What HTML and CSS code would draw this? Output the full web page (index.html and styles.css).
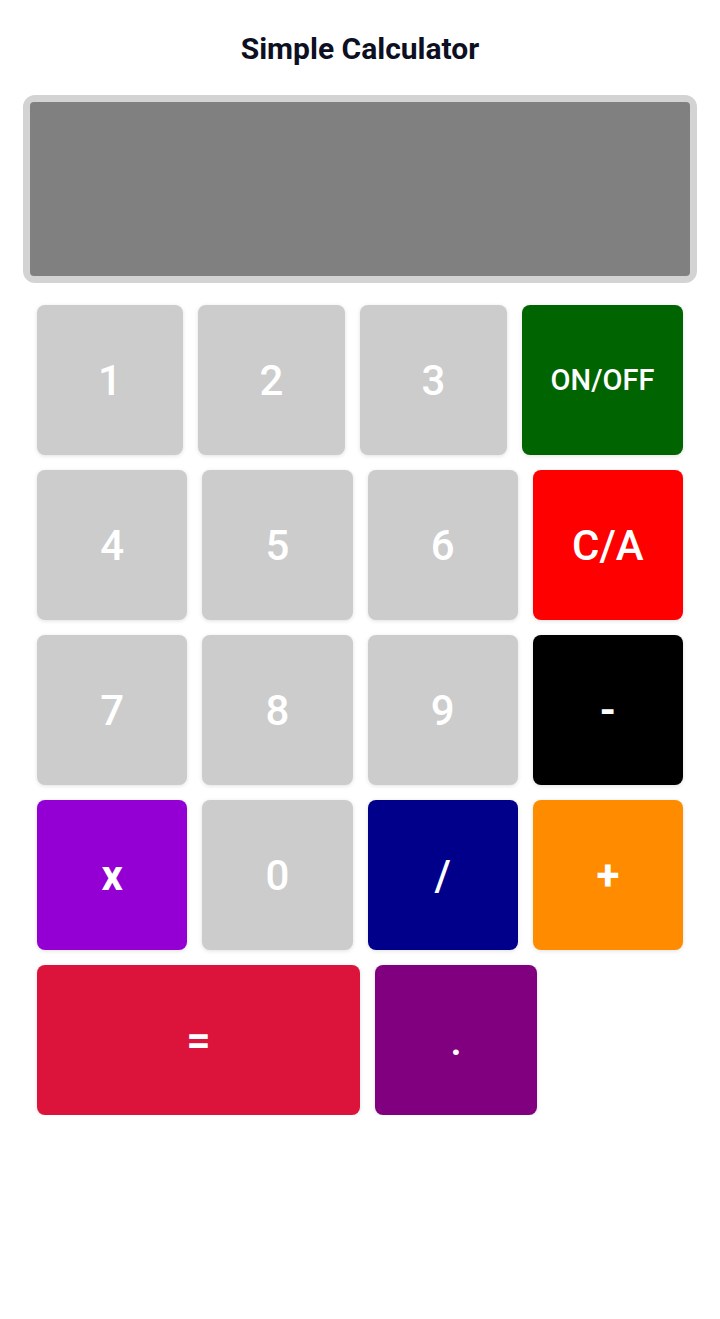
FILE: index.html
```html
<!DOCTYPE html>
<html>
<head>
<meta charset="utf-8">
<link rel="stylesheet" href="styles.css">
</head>
<body>
<h1 class="title">Simple Calculator</h1>
<div class="display"><div class="screen"></div></div>
<div class="keys">
  <div class="row row-first">
    <button class="key gray">1</button>
    <button class="key gray">2</button>
    <button class="key gray">3</button>
    <button class="key green small">ON/OFF</button>
  </div>
  <div class="row">
    <button class="key gray">4</button>
    <button class="key gray">5</button>
    <button class="key gray">6</button>
    <button class="key red">C/A</button>
  </div>
  <div class="row">
    <button class="key gray">7</button>
    <button class="key gray">8</button>
    <button class="key gray">9</button>
    <button class="key black bold">-</button>
  </div>
  <div class="row">
    <button class="key violet bold">x</button>
    <button class="key gray">0</button>
    <button class="key navy">/</button>
    <button class="key orange bold">+</button>
  </div>
  <div class="row row-last">
    <button class="key crimson bold">=</button>
    <button class="key purple">.</button>
  </div>
</div>
</body>
</html>
```

FILE: styles.css
```css
* { box-sizing: border-box; }
body {
  margin: 0;
  background: #ffffff;
  font-family: Roboto, "Liberation Sans", sans-serif;
}
.title {
  margin: 29px 0 0;
  height: 40px;
  line-height: 40px;
  text-align: center;
  font-size: 30px;
  font-weight: 700;
  color: #0c1022;
}
.display {
  margin: 26px 23px 0;
  height: 188px;
  border: 7px solid #d3d3d3;
  border-radius: 12px;
  background: #d3d3d3;
}
.screen {
  height: 100%;
  background: #808080;
  border-radius: 4px;
}
.keys {
  margin-top: 22px;
  padding: 0 37px;
  display: flex;
  flex-direction: column;
  gap: 15px;
}
.row {
  display: grid;
  grid-template-columns: repeat(4, 1fr);
  gap: 15px;
}
.row-first { grid-template-columns: 146fr 147fr 147fr 161fr; }
.row-last { grid-template-columns: 323px 162px; }
.key {
  height: 150px;
  border: none;
  border-radius: 8px;
  color: #ffffff;
  font-family: Roboto, "Liberation Sans", sans-serif;
  font-size: 42px;
  font-weight: 500;
  padding: 0;
  box-shadow: 0 1px 4px rgba(0, 0, 0, 0.12);
}
.small { font-size: 29px; }
.bold { font-weight: 700; }
.gray { background: #cccccc; }
.green { background: #006400; }
.red { background: #ff0000; }
.black { background: #000000; }
.violet { background: #9400d3; }
.navy { background: #00008b; }
.orange { background: #ff8c00; }
.crimson { background: #dc143c; }
.purple { background: #800080; }
```
